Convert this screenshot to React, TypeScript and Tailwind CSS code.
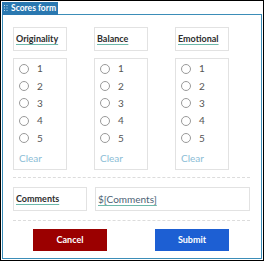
const columns = ["Originality", "Balance", "Emotional"];
const options = ["1", "2", "3", "4", "5"];

const Grip = () => (
  <svg width="4" height="7" viewBox="0 0 4 7" className="shrink-0">
    {[0, 1, 2].map((r) =>
      [0, 1].map((c) => (
        <rect key={`${r}-${c}`} x={c * 2.5} y={r * 2.5} width="1" height="1" fill="#bcd6ea" />
      ))
    )}
  </svg>
);

const Radio = () => (
  <span className="inline-block w-[10px] h-[10px] rounded-full border border-[#9a9a9a] bg-white shrink-0" />
);

export default function App() {
  return (
    <div
      className="w-[264px] h-[261px] border border-black p-px bg-white flex flex-col"
      style={{ fontFamily: "Lato, 'Open Sans', sans-serif" }}
    >
      <div className="flex h-[13px]">
        <div className="w-[56px] bg-[#2a78b0] flex items-center gap-[3px] pl-[2px]">
          <Grip />
          <span className="text-white font-bold text-[8.5px] leading-none">Scores form</span>
        </div>
        <div className="flex-1 border-b border-[#3b8db8]" />
      </div>
      <div className="flex-1 border border-t-0 border-[#3b8db8] pl-[10px] pr-[9px] pt-[12px]">
        <div className="flex gap-[27px]">
          {columns.map((col) => (
            <div key={col} className="w-[54px] flex flex-col gap-[7px]">
              <div className="h-[24px] border border-[#e2e2e2] flex items-center pl-[2px]">
                <span className="text-[9px] font-bold text-[#2d2d2d] underline decoration-[#6db8aa] underline-offset-2">
                  {col}
                </span>
              </div>
              <div className="h-[112px] border border-[#e2e2e2] flex flex-col pt-px pl-[5px]">
                {options.map((o) => (
                  <div key={o} className="h-[17.4px] flex items-center gap-[8px]">
                    <Radio />
                    <span className="text-[10px] text-[#555]">{o}</span>
                  </div>
                ))}
                <div className="mt-[4px] text-[10px] text-[#8cbdd6]">Clear</div>
              </div>
            </div>
          ))}
        </div>
        <div className="mt-[7px] border-t border-dashed border-[#dcdcdc] w-[237px]" />
        <div className="flex gap-[8px] mt-[9px] w-[237px]">
          <div className="w-[74px] h-[24px] border border-[#e2e2e2] flex items-center pl-[2px]">
            <span className="text-[9px] font-bold text-[#2d2d2d] underline decoration-[#6db8aa] underline-offset-2">
              Comments
            </span>
          </div>
          <div className="flex-1 h-[24px] border border-[#e2e2e2] flex items-center pl-[2px]">
            <span className="text-[10px] text-[#4b5f74] underline decoration-[#6db8aa] underline-offset-2">
              $[Comments]
            </span>
          </div>
        </div>
        <div className="mt-[9px] border-t border-dashed border-[#dcdcdc] w-[237px]" />
        <div className="flex gap-[48px] ml-[20px] mt-[8px]">
          <button className="w-[74px] h-[22px] bg-[#9b0000] text-white text-[9px] font-bold">Cancel</button>
          <button className="w-[74px] h-[22px] bg-[#1d5fd3] text-white text-[9px] font-bold">Submit</button>
        </div>
      </div>
    </div>
  );
}
